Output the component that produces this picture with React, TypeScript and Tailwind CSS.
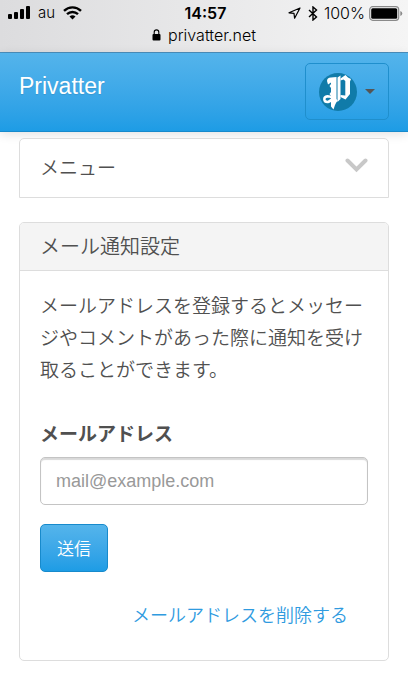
import React, { useState } from "react";

function StatusBar() {
  return (
    <div className="h-[53px] border-b border-[#4a8fbd] bg-gradient-to-r from-[#dcdcde] to-[#f5f5f5] font-['Inter','Liberation_Sans',sans-serif] text-black">
      <div className="grid h-[26px] grid-cols-[1fr_auto_1fr] items-center pl-2 pr-[5px]">
        <div className="flex items-center">
          <svg width="22" height="14" viewBox="0 0 22 14">
            <rect x="0" y="8" width="4" height="5" rx="1" />
            <rect x="6" y="6" width="4" height="7" rx="1" />
            <rect x="12" y="3" width="4" height="10" rx="1" />
            <rect x="18" y="0" width="4" height="13" rx="1" />
          </svg>
          <span className="ml-2 text-[15px] leading-5">au</span>
          <svg className="ml-2" width="19" height="14" viewBox="0 0 19 14" fill="none" stroke="currentColor" strokeWidth="2.4">
            <path d="M1 4.8C5.8 0.2 13.2 0.2 18 4.8" />
            <path d="M4 8.2C7.2 5.2 11.8 5.2 15 8.2" />
            <path d="M9.5 13.4 6.5 10.5Q9.5 8 12.5 10.5Z" fill="currentColor" stroke="none" />
          </svg>
        </div>
        <span className="text-[16px] font-semibold leading-5">14:57</span>
        <div className="flex items-center justify-end">
          <svg width="13" height="12" viewBox="0 0 13 12" fill="none" stroke="currentColor" strokeWidth="1.2" strokeLinejoin="round">
            <path d="M12 1 1 5.800l5 .6.6 4.800Z" />
          </svg>
          <svg className="ml-[7px]" width="10" height="15" viewBox="0 0 10 15" fill="none" stroke="currentColor" strokeWidth="1.4">
            <path d="m1 4 7.500 7L5 14V1l3.500 3L1 11" />
          </svg>
          <span className="ml-[6px] text-[16px] leading-5">100%</span>
          <svg className="ml-1" width="34" height="15" viewBox="0 0 34 15">
            <rect x="0.700" y="0.700" width="29" height="13.600" rx="3" fill="none" stroke="#8a8a8a" strokeWidth="1.200" />
            <rect x="2.200" y="2.200" width="26" height="10.600" rx="1.500" />
            <path d="M31.300 5v5q2-.6 2-2.500t-2-2.500Z" fill="#8a8a8a" />
          </svg>
        </div>
      </div>
      <div className="flex h-[18px] items-center justify-center gap-[7px]">
        <svg width="9" height="12" viewBox="0 0 9 12">
          <rect x="0.500" y="5" width="8" height="6.500" rx="1" />
          <path d="M2.200 5.500V3.200a2.300 2.300 0 0 1 4.600 0v2.300" fill="none" stroke="currentColor" strokeWidth="1.100" />
        </svg>
        <span className="text-[16px] leading-5">privatter.net</span>
      </div>
    </div>
  );
}

function Logo() {
  return (
    <svg width="38" height="38" viewBox="0 0 38 38">
      <circle cx="19" cy="19" r="19" fill="#107ba9" />
      <g fill="#fff">
        {/* left stem with its flag and spurs */}
        <path d="M8 8Q8 4.500 12 4.500L17.500 4V29L16 32 14.500 36.500 12 33.500V23L10.500 21 12 19V15L10.500 13 12 11V9.500L9 11.500Z" />
        {/* inner stem */}
        <path d="M18.500 4.500 21.500 2.500V26L18.500 29Z" />
        {/* bowl */}
        <path d="M21.500 5.500 26.500 2 29 4.500 32 6 31 8.500V21L26.500 26.500 21.500 24V22L26.300 22.500V8L24.500 6.500 21.500 7.500Z" />
      </g>
      <path
        d="M18 28.500Q13.500 23.500 8.500 23.300 5 23.800 5.300 26.500T9 29Q12.500 28 14 24"
        fill="none"
        stroke="#fff"
        strokeWidth="2.4"
      />
    </svg>
  );
}

function Navbar() {
  return (
    <header className="flex h-[79px] justify-between border-b border-[#178acc] bg-gradient-to-b from-[#54b4eb] to-[#1d9ce5] px-[19px] shadow-[0_2px_10px_rgba(0,0,0,0.12)]">
      <a
        href="#"
        className="mt-[19px] font-['Liberation_Sans',sans-serif] text-[23px] leading-7 text-white [text-shadow:0_1px_1px_rgba(0,0,0,0.1)]"
      >
        Privatter
      </a>
      <button
        type="button"
        aria-label="アカウント"
        className="mt-[10px] flex h-[57px] w-[84px] items-center gap-2 rounded-[5px] border border-[#1f8fcd] pl-[13px]"
      >
        <Logo />
        <svg width="10" height="5" viewBox="0 0 10 5">
          <path d="M0 0h10L5 5Z" fill="#555" />
        </svg>
      </button>
    </header>
  );
}

export default function App() {
  const [email, setEmail] = useState("");

  return (
    <div className="bg-white pb-5 font-['Noto_Sans_CJK_JP',sans-serif] text-[19px] font-[350] leading-8 text-[#505050]">
      <StatusBar />
      <Navbar />

      <main className="px-[19px] pt-[6px]">
        {/* Collapsed menu */}
        <button
          type="button"
          className="flex h-[60px] w-full items-center justify-between rounded-t-[5px] border border-[#ddd] bg-white px-5 pb-[2px]"
        >
          <span>メニュー</span>
          <svg width="23" height="15" viewBox="0 0 23 15" className="mb-1">
            <path d="m2.500 2.500 9 9 9-9" fill="none" stroke="#c8c8c8" strokeWidth="4" strokeLinecap="round" />
          </svg>
        </button>

        {/* Mail notification panel */}
        <section className="mt-6 rounded-[5px] border border-[#ddd]">
          <h1 className="rounded-t-[4px] border-b border-[#ddd] bg-[#f4f4f4] px-5 pb-2 pt-[7px] text-[20px]">
            メール通知設定
          </h1>
          <form className="px-5 pb-[30px] pt-[18px]" onSubmit={(e) => e.preventDefault()}>
            <p>メールアドレスを登録するとメッセージやコメントがあった際に通知を受け取ることができます。</p>
            <label htmlFor="email" className="mb-2 mt-8 block font-bold">
              メールアドレス
            </label>
            <input
              id="email"
              type="email"
              value={email}
              onChange={(e) => setEmail(e.target.value)}
              placeholder="mail@example.com"
              className="block h-12 w-full rounded-[5px] border border-[#c4c4c4] bg-white px-[15px] font-['Liberation_Sans',sans-serif] text-[18px] font-normal shadow-[inset_0_2px_1px_rgba(0,0,0,0.15)] placeholder:text-[#999]"
            />
            <button
              type="submit"
              className="mt-[19px] block h-12 rounded-[5px] border border-[#178acc] bg-gradient-to-b from-[#54b4eb] to-[#1d9ce5] px-4 text-[17px] leading-6 text-white"
            >
              送信
            </button>
            <div className="mt-[26px] pr-5 text-right text-[18px]">
              <a href="#" className="text-[#2f9bdf]">
                メールアドレスを削除する
              </a>
            </div>
          </form>
        </section>
      </main>
    </div>
  );
}
